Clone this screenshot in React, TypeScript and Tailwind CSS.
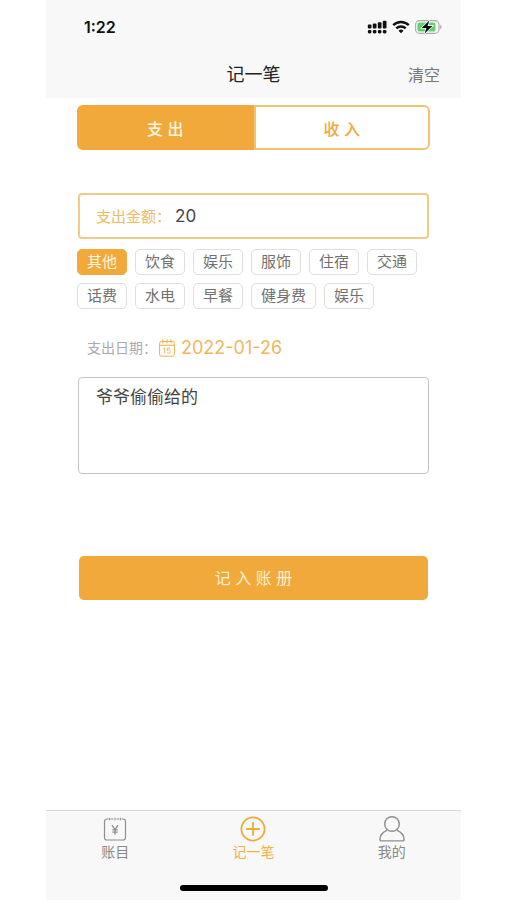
import { useState } from "react";
import { clsx } from "clsx";

const categories = [
    "其他", "饮食", "娱乐", "服饰", "住宿", "交通",
    "话费", "水电", "早餐", "健身费", "娱乐",
];

function SignalIcon() {
    return (
        <svg width="20" height="14" viewBox="0 0 20 14" fill="#111" aria-hidden="true">
            <rect x="0.8" y="4.4" width="3.7" height="4.2" rx="1" />
            <rect x="5.8" y="3.4" width="3.7" height="5.2" rx="1" />
            <rect x="10.8" y="2.2" width="3.7" height="6.4" rx="1" />
            <rect x="15.8" y="0.8" width="3.7" height="7.8" rx="1" />
            <rect x="0.8" y="10" width="3.7" height="3.5" rx="1.4" />
            <rect x="5.8" y="10" width="3.7" height="3.5" rx="1.4" />
            <rect x="10.8" y="10" width="3.7" height="3.5" rx="1.4" />
            <rect x="15.8" y="10" width="3.7" height="3.5" rx="1.4" />
        </svg>
    );
}

function WifiIcon() {
    return (
        <svg width="18" height="14" viewBox="0 0 18 14" fill="none" stroke="#111" strokeWidth="2.4" aria-hidden="true">
            <path d="M1.2 5.2a11.2 11.2 0 0 1 15.6 0" />
            <path d="M4.3 8.4a6.8 6.8 0 0 1 9.4 0" />
            <path d="M9 13.2 6.5 10.7a3.6 3.6 0 0 1 5 0Z" fill="#111" stroke="none" />
        </svg>
    );
}

function BatteryIcon() {
    return (
        <svg width="27" height="14" viewBox="0 0 27 14" aria-hidden="true">
            <rect x="0.6" y="0.6" width="23.4" height="12.8" rx="4" fill="#f8f8f8" stroke="#aaa" strokeWidth="1.1" />
            <rect x="2.4" y="2.4" width="18" height="9.2" rx="2.2" fill="#66cf70" />
            <path d="M25.2 4.8v4.4c.9-.4 1.4-1.2 1.4-2.2s-.5-1.8-1.4-2.2Z" fill="#aaa" />
            <path d="M14.3.6 6.8 7.9h4.6L9.7 13.4l7.6-7.5h-4.7Z" fill="#000" stroke="#f8f8f8" strokeWidth="1.6" paintOrder="stroke" />
        </svg>
    );
}

function CalendarIcon() {
    return (
        <svg width="16" height="18" viewBox="0 0 16 18" fill="none" stroke="#f0ae49" aria-hidden="true">
            <rect x="0.6" y="2.5" width="14.8" height="14.7" rx="1.8" />
            <path d="M.6 6.3h14.8M3.9.4v4M8 .4v4M12.1.4v4" />
            <path d="M4.3 9.9 5.7 9v5.2M11.2 9H8.6l-.3 2.4c1.5-.7 3.2-.2 3.2 1.2 0 1.7-2.3 2.1-3.4 1" strokeWidth="0.9" />
        </svg>
    );
}

function LedgerIcon() {
    return (
        <svg width="24" height="24" viewBox="0 0 24 24" fill="none" stroke="#8e8e8e" strokeWidth="1.2" aria-hidden="true">
            <path d="M5.3 2H4a2.5 2.5 0 0 0-2.5 2.5v16A2.5 2.5 0 0 0 4 23h16a2.5 2.5 0 0 0 2.5-2.5v-16A2.5 2.5 0 0 0 20 2h-1.3M7.5 2h3M13.5 2h3" />
            <path d="M6.4.8v2.6M12 .8v2.6M17.6.8v2.6" strokeWidth="1" />
            <path d="m9 8.2 3 4.4 3-4.4M12 12.6v5.2M9.3 12.8h5.4M9.3 15.2h5.4" strokeWidth="1.3" />
        </svg>
    );
}

function AddIcon() {
    return (
        <svg width="26" height="26" viewBox="0 0 26 26" fill="none" stroke="#f0a93a" strokeWidth="1.8" aria-hidden="true">
            <circle cx="13" cy="13" r="11.6" />
            <path d="M13 6.2v13.6M6.2 13h13.6" />
        </svg>
    );
}

function UserIcon() {
    return (
        <svg width="26" height="26" viewBox="0 0 26 26" fill="none" stroke="#8e8e8e" strokeWidth="1.4" aria-hidden="true">
            <circle cx="13" cy="8" r="7.3" />
            <path d="M8 14.3C3.7 16 1 19.5.9 23.4c0 1 .5 1.5 1.4 1.5h21.4c.9 0 1.4-.5 1.4-1.5C25 19.5 22.3 16 18 14.3" />
        </svg>
    );
}

const tabs = [
    { label: "账目", icon: LedgerIcon },
    { label: "记一笔", icon: AddIcon },
    { label: "我的", icon: UserIcon },
];

export default function App() {
    const [type, setType] = useState("支 出");
    const [amount, setAmount] = useState("20");
    const [category, setCategory] = useState(0);
    const [date, setDate] = useState("2022-01-26");
    const [note, setNote] = useState("爷爷偷偷给的");

    const handleClear = () => {
        setAmount("");
        setNote("");
        setCategory(0);
    };

    return (
        <div className="min-h-screen bg-white font-['Inter','Noto_Sans_CJK_SC',sans-serif]">
            <div className="mx-auto flex min-h-screen w-full max-w-[415px] flex-col">
                <header className="bg-[#f8f8f8]">
                    <div className="flex h-[54px] items-center justify-between pr-[19px] pl-[38px]">
                        <span className="text-base font-semibold text-[#111]">1:22</span>
                        <div className="flex items-center gap-[5px]">
                            <SignalIcon />
                            <WifiIcon />
                            <BatteryIcon />
                        </div>
                    </div>
                    <div className="grid h-11 grid-cols-3 items-center px-[21px] pb-0.5">
                        <h1 className="col-start-2 text-center text-lg text-[#222]">记一笔</h1>
                        <button type="button" onClick={handleClear} className="justify-self-end text-base text-[#777]">
                            清空
                        </button>
                    </div>
                </header>

                <main className="flex-1 px-[31px] pt-[7px]">
                    <div className="flex h-[45px]">
                        {["支 出", "收 入"].map((item) => (
                            <button
                                key={item}
                                type="button"
                                onClick={() => setType(item)}
                                className={clsx(
                                    "flex-1 border-2 pt-0.5 text-base font-medium first:rounded-l-md last:rounded-r-md",
                                    type === item
                                        ? "border-[#f0a93a] bg-[#f0a93a] text-[#fff6e0]"
                                        : "border-[#f2c273] bg-white text-[#f0a93a]"
                                )}
                            >
                                {item}
                            </button>
                        ))}
                    </div>

                    <div className="mx-px mt-[43px] flex h-[46px] items-center gap-1 rounded border-2 border-[#f2cb87] px-4 pt-0.5">
                        <label htmlFor="amount" className="shrink-0 text-[15px] text-[#edbb68]">支出金额：</label>
                        <input
                            id="amount"
                            value={amount}
                            onChange={(e) => setAmount(e.target.value)}
                            className="w-full min-w-0 text-[17px] text-[#444] outline-none"
                        />
                    </div>

                    <div className="mt-2.5 flex flex-wrap gap-2">
                        {categories.map((name, i) => (
                            <button
                                key={i}
                                type="button"
                                onClick={() => setCategory(i)}
                                className={clsx(
                                    "h-[26px] rounded-[5px] border px-[9px] text-[15px] leading-6",
                                    category === i
                                        ? "border-[#f0a93a] bg-[#f0a93a] text-[#fff6e0]"
                                        : "border-[#dedede] bg-white text-[#707070]"
                                )}
                            >
                                {name}
                            </button>
                        ))}
                    </div>

                    <div className="mt-6 flex h-7 items-center gap-0.5 pt-px pl-2.5">
                        <label htmlFor="date" className="text-sm text-[#aaa]">支出日期：</label>
                        <CalendarIcon />
                        <input
                            id="date"
                            value={date}
                            onChange={(e) => setDate(e.target.value)}
                            className="ml-1 w-32 text-lg text-[#edb85f] outline-none"
                        />
                    </div>

                    <div className="mx-px mt-4 flex">
                        <textarea
                            aria-label="备注"
                            value={note}
                            onChange={(e) => setNote(e.target.value)}
                            className="h-[97px] w-full resize-none rounded border border-[#c4c4c4] px-[17px] py-[7px] text-[17px] leading-6 text-[#444] outline-none"
                        />
                    </div>

                    <div className="mx-0.5 mt-[82px] flex">
                        <button type="button" className="h-11 w-full rounded-[5px] bg-[#f0a93a] text-base text-[#fff0d0]">
                            记 入 账 册
                        </button>
                    </div>
                </main>

                <footer className="border-t border-[#d8d8d8] bg-[#f8f8f8]">
                    <nav className="grid h-[74px] grid-cols-3 pt-[5px]">
                        {tabs.map(({ label, icon: Icon }) => (
                            <a
                                key={label}
                                href="#"
                                className={clsx(
                                    "flex flex-col items-center text-sm",
                                    label === "记一笔" ? "text-[#f0b04a]" : "text-[#888]"
                                )}
                            >
                                <span className="flex h-[26px] items-center"><Icon /></span>
                                {label}
                            </a>
                        ))}
                    </nav>
                    <div className="mx-auto mb-[9px] h-1.5 w-[148px] rounded-full bg-black" />
                </footer>
            </div>
        </div>
    );
}
